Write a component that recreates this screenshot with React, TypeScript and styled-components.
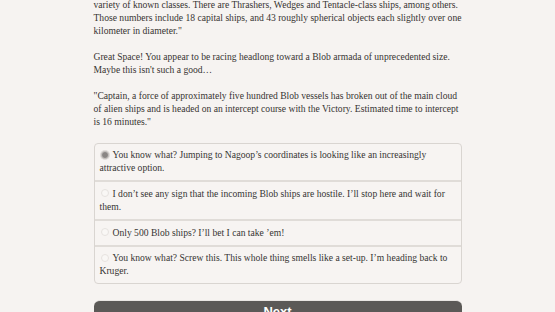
import React, { useState } from "react";
import styled, { createGlobalStyle } from "styled-components";

const Global = createGlobalStyle`
  html, body { margin: 0; padding: 0; background: #f6f3f1; }
  body { overflow: hidden; }
`;

const Page = styled.div`
  width: 368px;
  margin: -1px auto 0;
  font-family: "Liberation Serif", "Times New Roman", serif;
  font-size: 9.6px;
  line-height: 12.8px;
  color: #363432;
`;

const Para = styled.p`
  margin: 0 0 13.5px;
`;

const Choices = styled.div`
  margin-top: 14.5px;
  border: 1px solid #d9d5d1;
  border-radius: 4px;
  background: #f7f4f2;
  overflow: hidden;
`;

const Choice = styled.label<{ $first?: boolean }>`
  display: block;
  padding: 5.5px 12px 5.5px 5px;
  border-top: ${(p) => (p.$first ? "none" : "2px solid #e0dcd8")};
  cursor: pointer;
`;

const Radio = styled.span<{ $checked?: boolean }>`
  display: inline-block;
  width: 6px;
  height: 6px;
  border-radius: 50%;
  margin: 0 4px 0 1px;
  vertical-align: -0.5px;
  background: ${(p) => (p.$checked ? "#8a8684" : "#f9f7f5")};
  border: 1px solid ${(p) => (p.$checked ? "#c5c1be" : "#e6e2df")};
  box-shadow: ${(p) => (p.$checked ? "0 0 0 1px #dedad7" : "none")};
`;

const NextButton = styled.button`
  display: block;
  width: 100%;
  margin-top: 16px;
  border: none;
  border-top: 1px solid #e9e6e3;
  border-radius: 6px;
  background: #5b5957;
  color: #ffffff;
  font-family: "Liberation Sans", Arial, sans-serif;
  font-weight: bold;
  font-size: 13px;
  padding: 4px 0 12px;
  line-height: 13px;
  text-align: center;
`;

const options = [
  "You know what? Jumping to Nagoop\u2019s coordinates is looking like an increasingly attractive option.",
  "I don\u2019t see any sign that the incoming Blob ships are hostile. I\u2019ll stop here and wait for them.",
  "Only 500 Blob ships? I\u2019ll bet I can take \u2019em!",
  "You know what? Screw this. This whole thing smells like a set-up. I\u2019m heading back to Kruger.",
];

export default function App() {
  const [sel, setSel] = useState(0);
  return (
    <>
      <Global />
      <Page>
        <Para>
          variety of known classes. There are Thrashers, Wedges and Tentacle-class ships, among others.
          Those numbers include 18 capital ships, and 43 roughly spherical objects each slightly over one
          kilometer in diameter."
        </Para>
        <Para>
          Great Space! You appear to be racing headlong toward a Blob armada of unprecedented size.
          Maybe this isn't such a good…
        </Para>
        <Para>
          "Captain, a force of approximately five hundred Blob vessels has broken out of the main cloud
          of alien ships and is headed on an intercept course with the Victory. Estimated time to intercept
          is 16 minutes."
        </Para>
        <Choices>
          {options.map((o, i) => (
            <Choice key={i} $first={i === 0} onClick={() => setSel(i)}>
              <Radio $checked={sel === i} />
              {o}
            </Choice>
          ))}
        </Choices>
        <NextButton>Next</NextButton>
      </Page>
    </>
  );
}
